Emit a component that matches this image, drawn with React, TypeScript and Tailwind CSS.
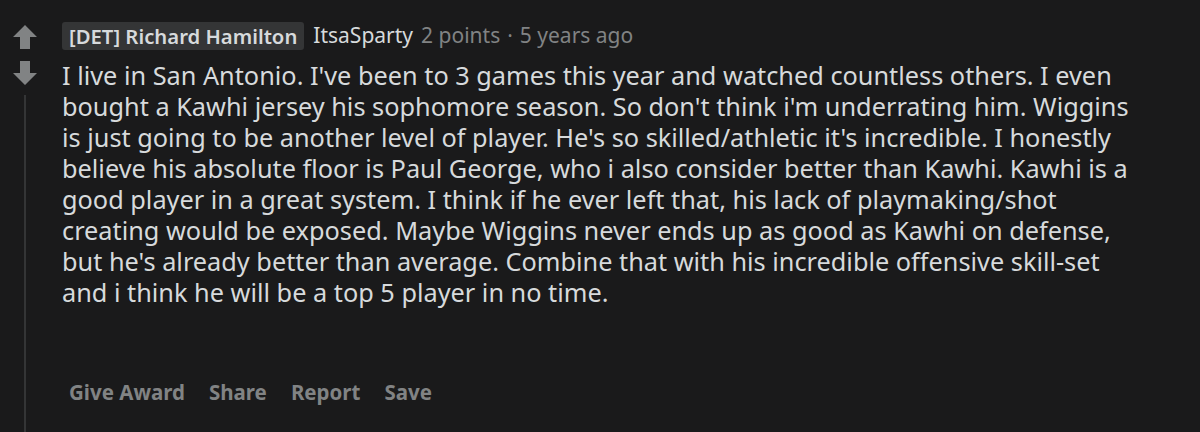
const lines = [
  "I live in San Antonio. I've been to 3 games this year and watched countless others. I even",
  "bought a Kawhi jersey his sophomore season. So don't think i'm underrating him. Wiggins",
  "is just going to be another level of player. He's so skilled/athletic it's incredible. I honestly",
  "believe his absolute floor is Paul George, who i also consider better than Kawhi. Kawhi is a",
  "good player in a great system. I think if he ever left that, his lack of playmaking/shot",
  "creating would be exposed. Maybe Wiggins never ends up as good as Kawhi on defense,",
  "but he's already better than average. Combine that with his incredible offensive skill-set",
  "and i think he will be a top 5 player in no time.",
];

const actions = ["Give Award", "Share", "Report", "Save"];

function Arrow({ down = false }: { down?: boolean }) {
  return (
    <svg width="24" height="24" viewBox="0 0 24 24" className={down ? "rotate-180" : ""}>
      <path d="M12 0 L24 12 L17 12 L17 24 L7 24 L7 12 L0 12 Z" fill="#818384" />
    </svg>
  );
}

export default function App() {
  return (
    <div className="w-[1200px] h-[432px] overflow-hidden bg-[#1a1a1b] flex font-['Noto_Sans',sans-serif]">
      {/* vote column + thread line */}
      <div className="w-[50px] flex flex-col items-center pt-[25px]">
        <Arrow />
        <div className="h-[12px]" />
        <Arrow down />
        <div className="mt-[10px] w-[2px] flex-1 bg-[#343536]" />
      </div>

      <div className="flex flex-col pl-[12px] pt-[22px]">
        {/* header */}
        <div className="flex items-center h-[28px] text-[21px]">
          <span className="bg-[#343536] text-[#d7dadc] text-[20.3px] font-semibold rounded-[3px] px-[7px] leading-[28px]">
            [DET] Richard Hamilton
          </span>
          <span className="ml-[9px] text-[#d7dadc]">ItsaSparty</span>
          <span className="ml-[8px] text-[#818384]">2 points</span>
          <span className="mx-[7px] text-[#818384]">·</span>
          <span className="text-[#818384]">5 years ago</span>
        </div>

        {/* body */}
        <div className="mt-[10px] text-[#d7dadc] text-[25.3px] leading-[31px]">
          {lines.map((l, i) => (
            <div key={i} className="whitespace-nowrap">
              {l}
            </div>
          ))}
        </div>

        {/* actions */}
        <div className="flex gap-[24px] mt-[70px] pl-[7px] text-[#818384] text-[20.5px] font-bold leading-[28px]">
          {actions.map((a) => (
            <span key={a}>{a}</span>
          ))}
        </div>
      </div>
    </div>
  );
}
